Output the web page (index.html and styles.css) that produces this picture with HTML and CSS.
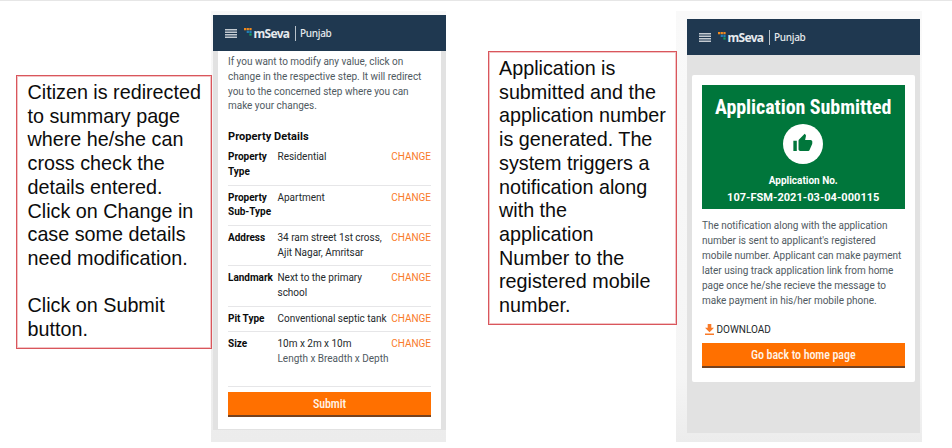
FILE: index.html
```html
<!DOCTYPE html>
<html lang="en">
<head>
<meta charset="utf-8">
<title>mSeva Punjab</title>
<link rel="stylesheet" href="styles.css">
</head>
<body>
<main class="slide">
  <section class="note note-summary">
    <p>Citizen is redirected<br>to summary page<br>where he/she can<br>cross check the<br>details entered.<br>Click on Change in<br>case some details<br>need modification.</p>
    <p>Click on Submit<br>button.</p>
  </section>

  <section class="shot shot-summary">
    <div class="phone">
      <header class="bar">
        <svg class="menu" viewBox="0 0 12 9"><path d="M0 .8h12M0 3.300h12M0 5.800h12M0 8.300h12"/></svg>
        <svg class="mark" viewBox="0 0 8 8"><path fill="#f08a1d" d="M0 0h2.200v2.200H0zM2.700 0h2.200v2.200H2.700zM5.400 0h2.200v2.200H5.400z"/><path fill="#1f7fb8" d="M2.700 2.700h2.200v2.200H2.700zM5.400 2.700h2.200v2.200H5.400z"/><path fill="#13a05f" d="M5.400 5.400h2.200v2.200H5.400z"/></svg>
        <span class="brand">mSeva</span><span class="city">Punjab</span>
      </header>
      <div class="sheet">
        <p class="copy">If you want to modify any value, click on<br>change in the respective step. It will redirect<br>you to the concerned step where you can<br>make your changes.</p>
        <h2>Property Details</h2>
        <dl>
          <div class="row"><dt>Property<br>Type</dt><dd>Residential</dd><a>CHANGE</a></div>
          <div class="row"><dt>Property<br>Sub-Type</dt><dd>Apartment</dd><a>CHANGE</a></div>
          <div class="row"><dt>Address</dt><dd>34 ram street 1st cross,<br>Ajit Nagar, Amritsar</dd><a>CHANGE</a></div>
          <div class="row"><dt>Landmark</dt><dd>Next to the primary<br>school</dd><a>CHANGE</a></div>
          <div class="row"><dt>Pit Type</dt><dd>Conventional septic tank</dd><a>CHANGE</a></div>
          <div class="row last"><dt>Size</dt><dd>10m x 2m x 10m<br><small>Length x Breadth x Depth</small></dd><a>CHANGE</a></div>
        </dl>
        <div class="button">Submit</div>
      </div>
    </div>
  </section>

  <section class="note note-done">
    <p>Application is<br>submitted and the<br>application number<br>is generated. The<br>system triggers a<br>notification along<br>with the<br>application<br>Number to the<br>registered mobile<br>number.</p>
  </section>

  <section class="shot shot-done">
    <div class="phone">
      <header class="bar">
        <svg class="menu" viewBox="0 0 12 9"><path d="M0 .8h12M0 3.300h12M0 5.800h12M0 8.300h12"/></svg>
        <svg class="mark" viewBox="0 0 8 8"><path fill="#f08a1d" d="M0 0h2.200v2.200H0zM2.700 0h2.200v2.200H2.700zM5.400 0h2.200v2.200H5.400z"/><path fill="#1f7fb8" d="M2.700 2.700h2.200v2.200H2.700zM5.400 2.700h2.200v2.200H5.400z"/><path fill="#13a05f" d="M5.400 5.400h2.200v2.200H5.400z"/></svg>
        <span class="brand">mSeva</span><span class="city">Punjab</span>
      </header>
      <div class="card">
        <div class="banner">
          <h1>Application Submitted</h1>
          <svg class="thumb" viewBox="0 0 40 40"><circle cx="20" cy="20" r="20" fill="#fff"/><g transform="translate(9.500 9) scale(.86)"><path d="M1 21h4V9H1v12zm22-11c0-1.100-.9-2-2-2h-6.310l.95-4.570.03-.32c0-.41-.17-.79-.44-1.060L14.170 1 7.590 7.590C7.220 7.950 7 8.450 7 9v10c0 1.100.9 2 2 2h9c.83 0 1.540-.5 1.840-1.220l3.020-7.050c.09-.23.14-.47.14-.73v-2z" fill="#00763b"/></g></svg>
          <div class="label">Application No.</div>
          <div class="number">107-FSM-2021-03-04-000115</div>
        </div>
        <p class="copy">The notification along with the application<br>number is sent to applicant's registered<br>mobile number. Applicant can make payment<br>later using track application link from home<br>page once he/she recieve the message to<br>make payment in his/her mobile phone.</p>
        <div class="download"><svg viewBox="0 0 9 11"><path d="M2.700 0h3.600v3.800H9L4.500 8.300 0 3.800h2.700zM0 9.600h9v1.400H0z"/></svg><span>DOWNLOAD</span></div>
        <div class="button">Go back to home page</div>
      </div>
    </div>
  </section>
</main>
</body>
</html>
```

FILE: styles.css
```css
* { box-sizing: border-box; margin: 0; padding: 0; }
body { background: #fff; overflow: hidden; }
.slide {
  width: 952px; height: 448px;
  border-top: 1px solid #e6e6e6;
  display: flex; align-items: flex-start;
}
.note {
  flex: none;
  position: relative; z-index: 1;
  border: 1px solid #d9565c;
  box-shadow: inset 0 0 0 1px #f3c3c5;
  font: 19.750px/23.700px "Liberation Sans", Arial, sans-serif;
  color: #0c0c0c; white-space: nowrap;
}
.note p + p { margin-top: 23.700px; }
.note-summary { width: 196px; height: 274px; margin: 74px 0 0 16px; padding: 5px 0 0 10.500px; }
.note-done { width: 189px; height: 274px; margin: 50px 0 0 42px; padding: 5px 0 0 10px; }

.shot { flex: none; height: 431px; margin-top: 10px; font-family: Roboto, sans-serif; white-space: nowrap; }
.shot-summary { width: 235px; margin-left: -1px; padding: 4px 0 0 2px; background: linear-gradient(#f8f8f8, #ececec); }
.shot-done { width: 246px; margin-left: -1px; padding: 8px 2.500px 0 11px; background: linear-gradient(#f9f9f9, #f5f5f5 85%, #ececec); }
.phone { background: #e2e2e2; }
.shot-summary .phone { height: 415px; }
.shot-done .phone { height: 414px; }

.bar { height: 36px; background: #1f3850; display: flex; align-items: center; color: #e6eaee; font-family: "Noto Sans", sans-serif; }
.menu { flex: none; width: 12px; height: 9px; margin-left: 11.500px; stroke: #c3cad1; stroke-width: 1.400; }
.mark { flex: none; width: 8px; height: 8px; margin: -3px 0 0 7.500px; }
.brand { width: 42.500px; padding-left: 1.500px; font-weight: 700; font-size: 12px; letter-spacing: -.7px; line-height: 15px; }
.city { border-left: 1px solid #b9c2ca; padding-left: 4.500px; font-size: 10px; letter-spacing: -.3px; line-height: 15px; font-weight: 500; }

.sheet { margin: 0 5px; height: 378px; padding: 4px 10px 0; background: #fff; }
.copy { font-size: 10px; letter-spacing: -.02px; line-height: 14.800px; color: #505a5f; }
.sheet h2 { font-size: 11px; letter-spacing: .06px; line-height: 15px; margin-top: 15px; color: #0b0c0c; }
dl { padding-top: 1px; }
.row { display: flex; font-size: 10px; letter-spacing: -.02px; line-height: 14.800px; padding: 5px 0 4.800px; border-bottom: 1px solid #e6e6e8; color: #24292b; }
.row dt { width: 49.500px; font-weight: 700; color: #0b0c0c; }
.row dd { flex: 1; }
.row small { font-size: inherit; color: #505a5f; }
.row a { color: #f97a28; }
.row.last { padding-bottom: 18.800px; }
.button { height: 25px; background: #ff7000; border-bottom: 2px solid #75421f; color: #fff4e8; font-size: 12px; font-stretch: condensed; letter-spacing: -.08px; font-weight: 500; line-height: 25px; text-align: center; }
.sheet .button { margin-top: 5px; }

.card { margin: 20px 5px 0; height: 307px; padding: 10px 10px 0; background: #fff; border-radius: 2px; }
.banner { height: 124px; background: #00763b; color: #fff; text-align: center; display: flex; flex-direction: column; align-items: center; }
.banner h1 { font-size: 20px; letter-spacing: -.06px; line-height: 24px; margin-top: 10px; font-stretch: condensed; }
.thumb { width: 40px; height: 40px; margin-top: 5px; }
.label { font-size: 10px; font-weight: 700; line-height: 16px; margin-top: 9px; }
.number { font-size: 11px; font-weight: 700; line-height: 17px; letter-spacing: .04px; }
.card .copy { margin-top: 10px; line-height: 14.900px; }
.download { display: flex; align-items: center; height: 16px; margin: 13px 0 6px; padding-left: 3px; font-size: 10px; color: #24292b; }
.download svg { width: 9px; height: 11px; margin-right: 2.500px; fill: #f97a28; }
```
